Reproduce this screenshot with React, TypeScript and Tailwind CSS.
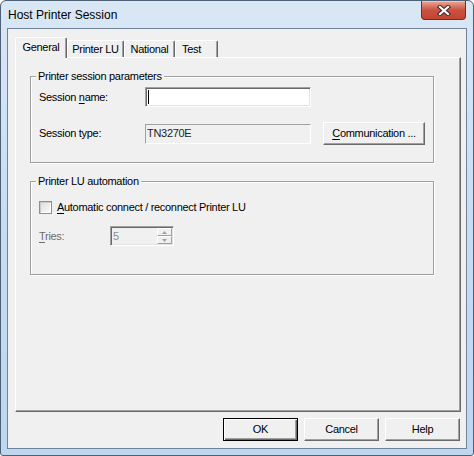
import type { ReactNode } from 'react'
import clsx from 'clsx'

function Ul({ children }: { children: ReactNode }) {
  return <span className="underline decoration-1 underline-offset-[2px]">{children}</span>
}

function Button({ children, isDefault = false }: { children: ReactNode; isDefault?: boolean }) {
  return (
    <button
      className={clsx(
        'flex h-[23px] w-[75px] items-center justify-center bg-[#f0f0f0] text-black',
        isDefault
          ? 'border border-black shadow-[inset_1px_1px_0_#fff,inset_-1px_-1px_0_#696969,inset_-2px_-2px_0_#a0a0a0]'
          : 'border border-t-white border-l-white border-r-[#696969] border-b-[#696969] shadow-[inset_-1px_-1px_0_#a0a0a0]',
      )}
    >
      {children}
    </button>
  )
}

function CloseIcon() {
  return (
    <svg width="14" height="11" viewBox="0 0 14 11">
      <path d="M3 2 L11 9 M11 2 L3 9" stroke="#3a2a2a" strokeWidth="4.2" strokeLinecap="square" />
      <path d="M3 2 L11 9 M11 2 L3 9" stroke="#ffffff" strokeWidth="2.2" strokeLinecap="square" />
    </svg>
  )
}

const tabs = [
  { label: 'General', selected: true, cls: 'w-[52px] justify-center' },
  { label: 'Printer LU', selected: false, cls: 'w-[57px] justify-center' },
  { label: 'National', selected: false, cls: 'w-[51px] justify-center' },
  { label: 'Test', selected: false, cls: 'w-[43px] justify-start pl-[6px]' },
]

export default function App() {
  return (
    <div className="h-[456px] w-[474px] bg-white font-['Liberation_Sans',Arial,sans-serif] text-[11px] leading-[13px] tracking-[-0.3px] text-black">
      <div className="flex h-[456px] w-[474px] flex-col rounded-t-[6px] rounded-b-[3px] border border-[#4e6075] bg-gradient-to-b from-[#d9e7f5] via-[#c8dcf1] to-[#bed6ef]">
        {/* title bar */}
        <div className="flex h-[27px] items-start">
          <span className="ml-[7px] mt-[7px] text-[12px] leading-[14px] tracking-normal text-black">
            Host Printer Session
          </span>
          <div className="mr-[7px] ml-auto flex h-[19px] w-[45px] items-center justify-center rounded-b-[4px] border border-t-0 border-[#7a2a22] bg-gradient-to-b from-[#e9a897] via-[#c9523f] to-[#c44432] shadow-[inset_0_1px_0_#f5c6b8]">
            <CloseIcon />
          </div>
        </div>

        {/* client area */}
        <div className="mx-[6px] flex h-[421px] w-[460px] flex-col border border-[#6f849b] bg-[#f0f0f0] px-[7px] pt-[8px]">
          {/* tabs */}
          <div className="flex h-[20px] items-end">
            {tabs.map((t) => (
              <div
                key={t.label}
                className={clsx(
                  'flex rounded-t-[2px] border-t border-r border-l border-white border-r-[#696969] bg-[#f0f0f0] shadow-[inset_-1px_0_0_#a0a0a0]',
                  t.cls,
                  t.selected ? 'relative z-10 -mb-px h-[21px] pt-[3px]' : 'h-[17px] pt-[2px]',
                )}
              >
                {t.label}
              </div>
            ))}
          </div>

          {/* tab panel */}
          <div className="h-[355px] w-[446px] border-t border-l border-white border-r border-b border-r-[#696969] border-b-[#696969] shadow-[inset_-1px_-1px_0_#a0a0a0]">
            {/* Printer session parameters */}
            <div className="relative mt-[18px] ml-[14px] w-[404px] border border-[#a0a0a0] pt-[10px] pr-[8px] pb-[17px] pl-[8px] shadow-[inset_1px_1px_0_#fff,1px_1px_0_#fff]">
              <span className="absolute top-[-7px] left-[5px] bg-[#f0f0f0] px-[2px]">Printer session parameters</span>
              <div className="flex h-[20px] items-center">
                <span className="w-[106px]">
                  Session <Ul>n</Ul>ame:
                </span>
                <div className="flex h-[20px] w-[166px] items-center border border-t-[#a0a0a0] border-l-[#a0a0a0] border-r-white border-b-white bg-white shadow-[inset_1px_1px_0_#696969,inset_-1px_-1px_0_#e3e3e3]">
                  <span className="ml-[2px] h-[14px] w-px bg-black" />
                </div>
              </div>
              <div className="mt-[15px] flex h-[23px] items-center">
                <span className="w-[106px]">Session type:</span>
                <div className="flex h-[20px] w-[166px] items-center border border-t-[#a0a0a0] border-l-[#a0a0a0] border-r-white border-b-white pl-px text-[#222]">
                  TN3270E
                </div>
                <div className="ml-[12px] flex h-[23px] w-[102px] items-center justify-center border border-t-white border-l-white border-r-[#696969] border-b-[#696969] shadow-[inset_-1px_-1px_0_#a0a0a0]">
                  <span>
                    <Ul>C</Ul>ommunication ...
                  </span>
                </div>
              </div>
            </div>

            {/* Printer LU automation */}
            <div className="relative mt-[18px] ml-[14px] w-[404px] border border-[#a0a0a0] pt-[19px] pr-[8px] pb-[28px] pl-[8px] shadow-[inset_1px_1px_0_#fff,1px_1px_0_#fff]">
              <span className="absolute top-[-7px] left-[5px] bg-[#f0f0f0] px-[2px]">Printer LU automation</span>
              <div className="flex h-[13px] items-center gap-[5px]">
                <span className="h-[13px] w-[13px] border border-[#8e8f8f] bg-gradient-to-br from-[#dcdcdc] to-[#fbfbfb] shadow-[inset_1px_1px_0_#c9c9c9,inset_-1px_-1px_0_#fff]" />
                <span>
                  <Ul>A</Ul>utomatic connect / reconnect Printer LU
                </span>
              </div>
              <div className="mt-[12px] flex h-[20px] items-center">
                <span className="w-[71px] text-[#6d6d6d]">
                  <Ul>T</Ul>ries:
                </span>
                <div className="flex h-[20px] w-[64px] border border-t-[#a0a0a0] border-l-[#a0a0a0] border-r-white border-b-white bg-[#f0f0f0] shadow-[inset_1px_1px_0_#696969,inset_-1px_-1px_0_#e3e3e3]">
                  <span className="flex flex-1 items-center pl-[2px] text-[#8d8d8d]">5</span>
                  <div className="mt-px mr-px flex w-[15px] flex-col">
                    <div className="flex h-[8px] items-center justify-center border border-t-white border-l-white border-r-[#a0a0a0] border-b-[#a0a0a0]">
                      <svg width="5" height="3" viewBox="0 0 5 3">
                        <path d="M2.5 0 L5 3 L0 3 Z" fill="#a0a0a0" />
                      </svg>
                    </div>
                    <div className="flex h-[8px] items-center justify-center border border-t-white border-l-white border-r-[#a0a0a0] border-b-[#a0a0a0]">
                      <svg width="5" height="3" viewBox="0 0 5 3">
                        <path d="M0 0 L5 0 L2.5 3 Z" fill="#a0a0a0" />
                      </svg>
                    </div>
                  </div>
                </div>
              </div>
            </div>
          </div>

          {/* dialog buttons */}
          <div className="mt-[6px] flex w-[446px] justify-end gap-[6px] pr-px">
            <Button isDefault>OK</Button>
            <Button>Cancel</Button>
            <Button>Help</Button>
          </div>
        </div>
      </div>
    </div>
  )
}
